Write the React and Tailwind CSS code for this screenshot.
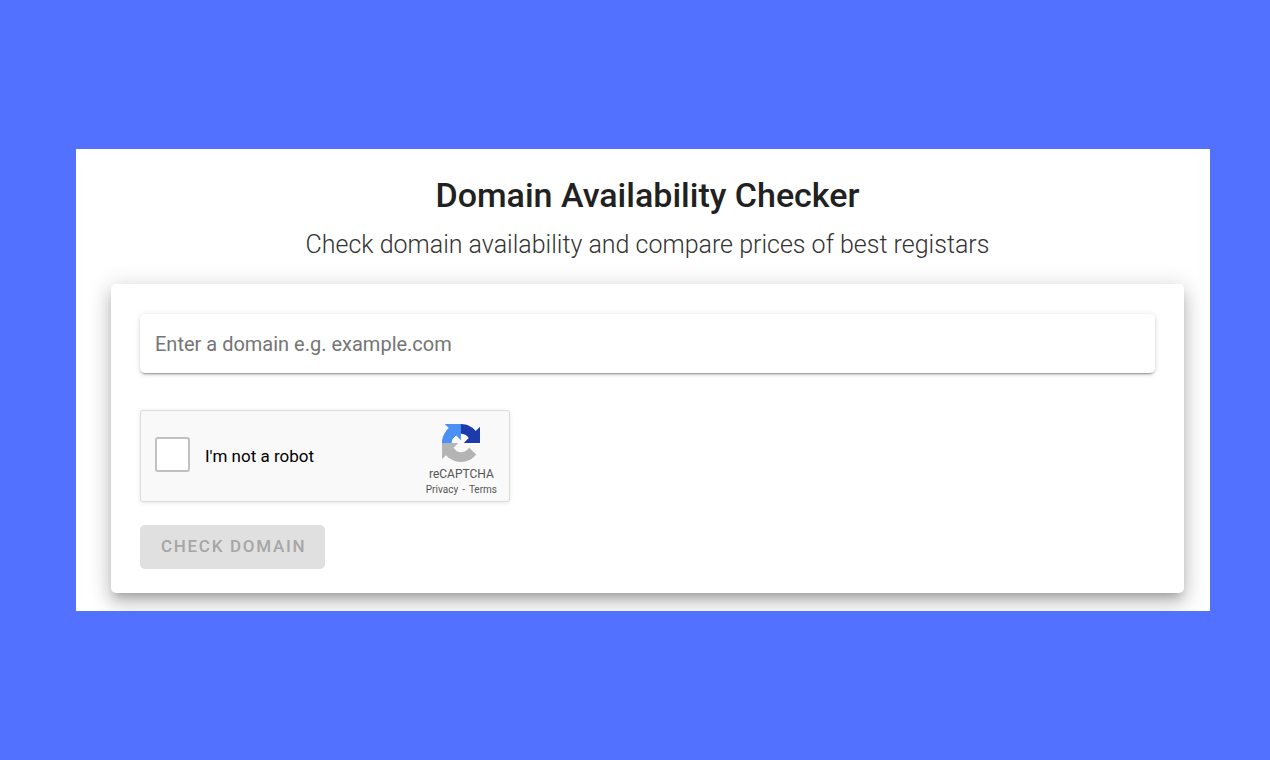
import { useState } from "react";

function RecaptchaLogo() {
  return (
    <svg viewBox="0 0 64 64" className="size-[38px]" aria-hidden="true">
      <path
        fill="#1c3aa9"
        d="M64 31.955l-.033-1.37V4.687l-7.16 7.16C50.948 4.674 42.033.093 32.05.093c-10.4 0-19.622 4.96-25.458 12.64l11.736 11.86a15.55 15.55 0 0 1 4.754-5.334c2.05-1.6 4.952-2.906 8.968-2.906.485 0 .86.057 1.135.163 4.976.393 9.288 3.14 11.828 7.124l-8.307 8.307L64 31.953"
      />
      <path
        fill="#4a90f5"
        d="M31.862.094l-1.37.033H4.594l7.16 7.16C4.58 13.147 0 22.06 0 32.046c0 10.4 4.96 19.622 12.64 25.458L24.5 45.768a15.55 15.55 0 0 1-5.334-4.754c-1.6-2.05-2.906-4.952-2.906-8.968 0-.485.057-.86.163-1.135.393-4.976 3.14-9.288 7.124-11.828l8.307 8.307L31.86.095"
      />
      <path
        fill="#b4b4b4"
        d="M.001 32.045l.033 1.37v25.898l7.16-7.16c5.86 7.173 14.774 11.754 24.76 11.754 10.4 0 19.622-4.96 25.458-12.64l-11.736-11.86a15.55 15.55 0 0 1-4.754 5.334c-2.05 1.6-4.952 2.906-8.968 2.906-.485 0-.86-.057-1.135-.163-4.976-.393-9.288-3.14-11.828-7.124l8.307-8.307c-10.522.04-22.4.066-27.295-.005"
      />
    </svg>
  );
}

function Recaptcha({ checked, onChange }) {
  return (
    <div className="flex w-full max-w-[370px] items-start justify-between rounded-[3px] border border-[#dcdcdc] bg-[#f9f9f9] pt-[13px] pr-3 pb-[5px] pl-[14px] shadow-[0_1px_4px_0_rgba(0,0,0,0.1)]">
      <div className="mt-[13px] flex items-center gap-[15px]">
        <input
          id="robot"
          type="checkbox"
          checked={checked}
          onChange={(e) => onChange(e.target.checked)}
          className="size-[35px] appearance-none rounded-[3px] border-2 border-[#c1c1c1] bg-white checked:bg-[#4285f4]"
        />
        <label htmlFor="robot" className="pt-0.5 text-[17px] leading-6 text-black">I'm not a robot</label>
      </div>
      <div className="flex flex-col items-center text-[#555]">
        <RecaptchaLogo />
        <span className="mt-1 text-[12px] leading-4">reCAPTCHA</span>
        <div className="mt-0.5 flex gap-1 text-[10px] leading-3">
          <a href="#privacy">Privacy</a>
          <span>-</span>
          <a href="#terms">Terms</a>
        </div>
      </div>
    </div>
  );
}

export default function App() {
  const [domain, setDomain] = useState("");
  const [verified, setVerified] = useState(false);

  return (
    <div className="flex min-h-screen items-center bg-[#5271ff] pr-[60px] pl-[76px] font-['Roboto',sans-serif]">
      <main className="w-full overflow-hidden bg-white pt-[22px] pr-[26px] pb-[18px] pl-[35px]">
        <h1 className="text-center text-[34px] leading-[48px] font-medium text-[#212121]">Domain Availability Checker</h1>
        <p className="mt-2 text-center text-[25px] leading-9 font-light text-[#333]">
          Check domain availability and compare prices of best registars
        </p>

        <form
          onSubmit={(e) => e.preventDefault()}
          className="mt-[21px] rounded-[5px] bg-white px-[29px] pt-[30px] pb-6 shadow-[0_7px_9px_-4px_rgba(0,0,0,0.2),0_10px_17px_1px_rgba(0,0,0,0.14),0_4px_22px_4px_rgba(0,0,0,0.12)]"
        >
          <input
            type="text"
            aria-label="Domain"
            value={domain}
            onChange={(e) => setDomain(e.target.value)}
            placeholder="Enter a domain e.g. example.com"
            className="block h-[59px] w-full rounded-[5px] bg-white px-[15px] text-[20px] text-[#212121] shadow-[0_4px_1px_-3px_rgba(0,0,0,0.2),0_2px_2px_0_rgba(0,0,0,0.14),0_1px_6px_0_rgba(0,0,0,0.12)] outline-none placeholder:text-[#757575]"
          />
          <div className="mt-[37px]">
            <Recaptcha checked={verified} onChange={setVerified} />
          </div>
          <button
            type="submit"
            disabled={!domain || !verified}
            className="mt-[23px] block h-11 rounded-[5px] bg-[#1976d2] pr-[19px] pl-[21px] text-[17px] font-medium tracking-widest text-white uppercase disabled:bg-[#e0e0e0] disabled:text-[#a6a6a6]"
          >
            Check domain
          </button>
        </form>
      </main>
    </div>
  );
}
